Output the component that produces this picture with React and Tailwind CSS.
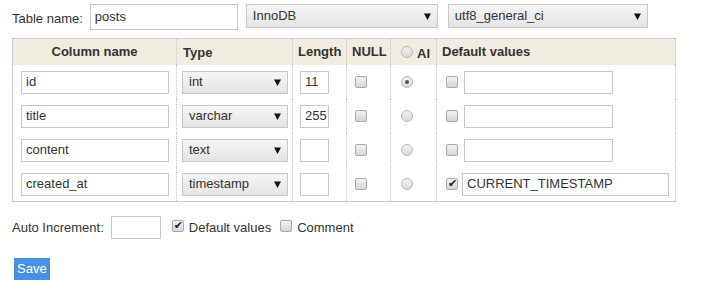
import React from 'react';

function Check({ checked }) {
  return (
    <span className="relative inline-flex w-[12px] h-[12px] shrink-0 rounded-[2px] border border-[#a9a9a9] bg-linear-to-b from-[#f2f2f2] to-[#d6d6d6]">
      {checked && (
        <span className="absolute left-[1px] top-[-3px] text-[11px] leading-[16px] text-[#222] font-['DejaVu_Sans',sans-serif]">✔</span>
      )}
    </span>
  );
}

function Radio({ checked }) {
  return (
    <span className="inline-flex items-center justify-center w-[12px] h-[12px] shrink-0 rounded-full border border-[#b9b9b9] bg-linear-to-b from-[#f0f0f0] to-[#dadada]">
      {checked && <span className="w-[4px] h-[4px] rounded-full bg-[#555]" />}
    </span>
  );
}

function Arrow() {
  return (
    <svg width="7" height="7" viewBox="0 0 7 7" className="shrink-0">
      <polygon points="0,0.5 7,0.5 3.5,7" fill="#111" />
    </svg>
  );
}

function Select({ value, className }) {
  return (
    <div className={`flex items-center justify-between border border-[#c8c8c8] bg-linear-to-b from-[#f6f6f6] to-[#e4e4e4] pl-[6px] pr-[6px] ${className}`}>
      <span>{value}</span>
      <Arrow />
    </div>
  );
}

function Input({ value, className }) {
  return (
    <div className={`flex items-center border border-[#c8c8c8] bg-white pl-[4px] ${className}`}>
      {value}
    </div>
  );
}

const rows = [
  { name: 'id', type: 'int', length: '11', ai: true, def: false, defVal: '' },
  { name: 'title', type: 'varchar', length: '255', ai: false, def: false, defVal: '' },
  { name: 'content', type: 'text', length: '', ai: false, def: false, defVal: '' },
  { name: 'created_at', type: 'timestamp', length: '', ai: false, def: true, defVal: 'CURRENT_TIMESTAMP' },
];

export default function App() {
  return (
    <div className="w-[705px] h-[289px] bg-white text-[#333] text-[13px] font-['Liberation_Sans',Arial,sans-serif] pl-[12px] pt-[4px]">
      <div className="flex items-start h-[26px]">
        <span className="mt-[5px]">Table name:</span>
        <Input value="posts" className="ml-[7px] w-[148px] h-[26px]" />
        <Select value="InnoDB" className="ml-[8px] w-[192px] h-[24px]" />
        <Select value="utf8_general_ci" className="ml-[10px] w-[200px] h-[24px]" />
      </div>

      <div className="mt-[8px] w-[664px] border-l border-t border-b border-[#cccccc]">
        <div className="flex h-[26px] bg-[#f0ece0] font-bold">
          <div className="w-[164px] flex items-center justify-center border-r border-dotted border-[#c4c4c4]">Column name</div>
          <div className="w-[116px] flex items-center pl-[6px] pt-[2px] border-r border-dotted border-[#c4c4c4]">Type</div>
          <div className="w-[54px] flex items-center pl-[5px] border-r border-dotted border-[#c4c4c4]">Length</div>
          <div className="w-[44px] flex items-center pl-[5px] border-r border-dotted border-[#c4c4c4]">NULL</div>
          <div className="w-[46px] flex items-center pl-[10px] gap-[4px] border-r border-dotted border-[#c4c4c4]">
            <Radio />
            <span className="pt-[3px]">AI</span>
          </div>
          <div className="w-[239px] flex items-center pl-[5px] border-r border-dotted border-[#c4c4c4]">Default values</div>
        </div>
        {rows.map((r) => (
          <div key={r.name} className="flex h-[34px]">
            <div className="w-[164px] flex items-center pl-[8px] border-r border-dotted border-[#c4c4c4]">
              <Input value={r.name} className="w-[148px] h-[23px]" />
            </div>
            <div className="w-[116px] flex items-center pl-[5px] border-r border-dotted border-[#c4c4c4]">
              <Select value={r.type} className="w-[106px] h-[23px]" />
            </div>
            <div className="w-[54px] flex items-center pl-[7px] border-r border-dotted border-[#c4c4c4]">
              <Input value={r.length} className="w-[29px] h-[23px] pl-[3px]" />
            </div>
            <div className="w-[44px] flex items-center pl-[8px] border-r border-dotted border-[#c4c4c4]">
              <Check />
            </div>
            <div className="w-[46px] flex items-center pl-[10px] border-r border-dotted border-[#c4c4c4]">
              <Radio checked={r.ai} />
            </div>
            <div className="w-[239px] flex items-center pl-[9px] border-r border-dotted border-[#c4c4c4]">
              <Check checked={r.def} />
              {r.def ? (
                <Input value={r.defVal} className="ml-[4px] w-[207px] h-[23px]" />
              ) : (
                <Input value="" className="ml-[6px] w-[149px] h-[23px]" />
              )}
            </div>
          </div>
        ))}
      </div>

      <div className="mt-[14px] flex items-center h-[23px]">
        <span>Auto Increment:</span>
        <Input value="" className="ml-[7px] w-[50px] h-[23px]" />
        <span className="ml-[11px]"><Check checked /></span>
        <span className="ml-[5px]">Default values</span>
        <span className="ml-[9px]"><Check /></span>
        <span className="ml-[5px]">Comment</span>
      </div>

      <button className="mt-[19px] ml-[2px] h-[22px] px-[3px] bg-[#4a90e2] text-white text-[13px] leading-[22px]">Save</button>
    </div>
  );
}
